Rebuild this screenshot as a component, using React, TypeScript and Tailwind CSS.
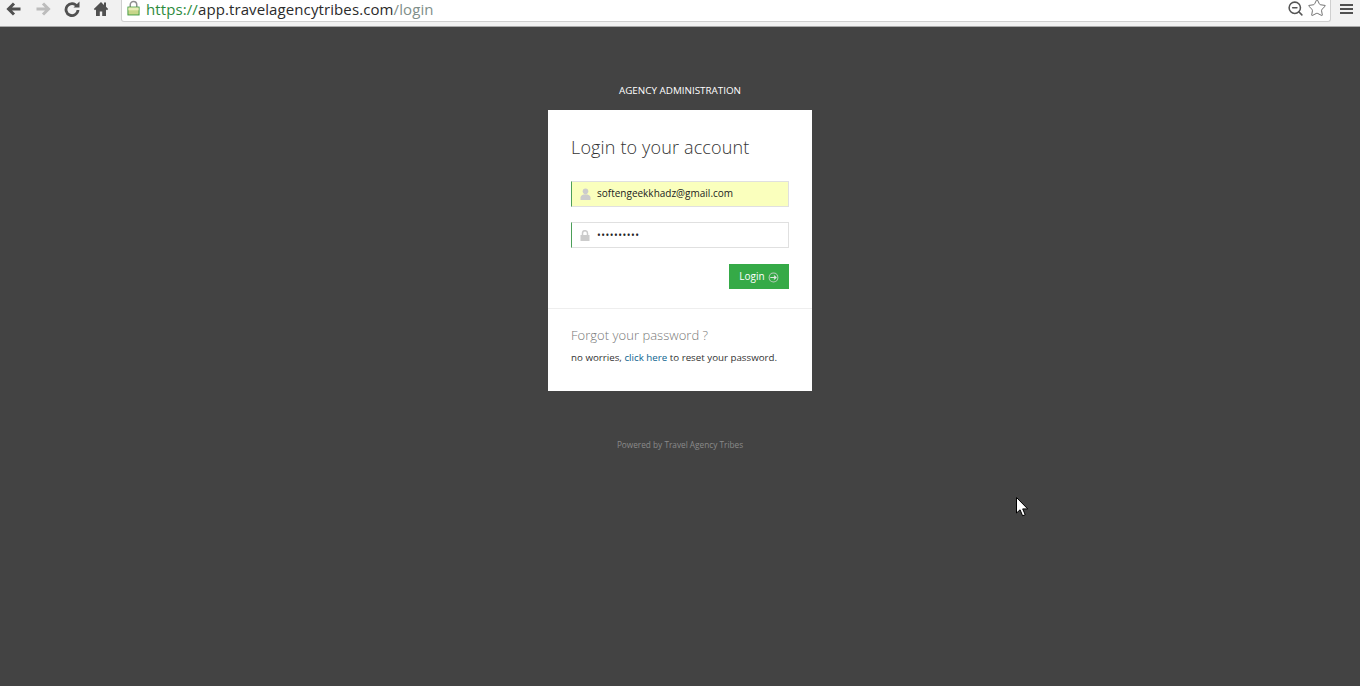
import { ZoomOut, Star } from 'lucide-react';

const openSans = { fontFamily: '"Open Sans", sans-serif' };

function BrowserBar() {
  return (
    <div className="h-[27px] flex items-start bg-[#f1f1f1] border-b border-[#a9a9a9]">
      <div className="w-[121px] h-[17px] flex items-center pl-[6px] shrink-0">
        <svg viewBox="0 0 16 16" className="w-[16px] h-[16px]">
          <path d="M14.5 8H3M8 2.5 2.5 8 8 13.5" fill="none" stroke="#505050" strokeWidth="3" />
        </svg>
        <svg viewBox="0 0 16 16" className="w-[16px] h-[16px] ml-[13px]">
          <path d="M1.5 8H13M8 2.5 13.5 8 8 13.5" fill="none" stroke="#bcbcbc" strokeWidth="3" />
        </svg>
        <svg viewBox="0 0 16 16" className="w-[16px] h-[16px] ml-[13px]">
          <path d="M13 5.2A6 6 0 1 0 14 9" fill="none" stroke="#505050" strokeWidth="2.8" />
          <path d="M9.5 6.5H15.5V0.5z" fill="#505050" />
        </svg>
        <svg viewBox="0 0 16 16" className="w-[16px] h-[16px] ml-[13px]">
          <path d="M8 1 0.8 8 2 9.2 3 8.4V15h3.8v-4.5h2.4V15H13V8.4l1 .8L15.2 8 13 5.8V1.5h-2v2.4z" fill="#505050" />
        </svg>
      </div>
      <div className="w-[1210px] h-[22px] bg-white border-l border-r border-b border-[#cfcfcf] rounded-b-[3px] flex items-center pl-[5px] pr-[3px] pb-[3px]">
        <svg viewBox="0 0 14 16" className="w-[13px] h-[16px] shrink-0 -mt-[2px]">
          <path d="M3.5 7V4.5a3.5 3.5 0 0 1 7 0V7" fill="none" stroke="#8f8f8f" strokeWidth="1.6" />
          <rect x="1" y="7" width="12" height="8.5" fill="#c8d68a" stroke="#3f9a3f" />
          <rect x="1.5" y="7.5" width="11" height="3" fill="#e8edb8" />
        </svg>
        <div className="ml-[6px] text-[15px] leading-[17px] tracking-[0.1px]">
          <span className="text-[#2e8b3d]">https://</span>
          <span className="text-[#2b2b2b]">app.travelagencytribes.com</span>
          <span className="text-[#7f8f8a]">/login</span>
        </div>
        <div className="ml-auto flex items-center gap-[3px] -mt-[2px]">
          <ZoomOut className="w-[17px] h-[17px] text-[#555555]" strokeWidth={2.2} />
          <Star className="w-[20px] h-[20px] text-[#666666]" strokeWidth={1.1} />
        </div>
      </div>
      <div className="flex-1 h-[17px] flex flex-col items-center justify-center gap-[2px] pl-[1px]">
        <div className="w-[13px] h-[2px] bg-[#505050]" />
        <div className="w-[13px] h-[2px] bg-[#505050]" />
        <div className="w-[13px] h-[2px] bg-[#505050]" />
      </div>
    </div>
  );
}

export default function App() {
  return (
    <div className="relative w-screen h-screen overflow-hidden bg-[#434343]" style={openSans}>
      <BrowserBar />

      <div className="flex flex-col items-center pt-[57px]">
        <div className="h-[12px] leading-[12px] text-[9.85px] text-white mb-[14px]">AGENCY ADMINISTRATION</div>

        {/* Login card */}
        <div className="w-[264px] h-[281px] bg-white flex flex-col">
          <div className="h-[199px] px-[23px] pt-[25px] border-b border-[#eeeeee]">
            <h3 className="h-[24px] text-[18px] leading-[24px] font-light tracking-[0.15px] text-[#333333]">Login to your account</h3>

            <div className="mt-[22px] h-[26px] flex items-center bg-[#faffbd] border border-[#e0e0e0] border-l-[#4c9f58] pb-[1px]">
              <svg viewBox="0 0 11 12" className="w-[11px] h-[12px] ml-[8px] shrink-0">
                <circle cx="5.5" cy="3.2" r="2.8" fill="#cccccc" />
                <path d="M0.5 12V9.5C0.5 7.5 2.5 6.2 5.5 6.2s5 1.3 5 3.3V12z" fill="#cccccc" />
              </svg>
              <span className="ml-[6px] text-[10px] text-[#222222]">softengeekkhadz@gmail.com</span>
            </div>

            <div className="mt-[15px] h-[26px] flex items-center bg-white border border-[#e0e0e0] border-l-[#4c9f58]">
              <svg viewBox="0 0 10 11" className="w-[10px] h-[11px] ml-[8px] shrink-0">
                <path d="M2.5 5V3.2a2.5 2.5 0 0 1 5 0V5" fill="none" stroke="#cccccc" strokeWidth="1.5" />
                <rect x="0.5" y="5" width="9" height="6" fill="#cccccc" />
              </svg>
              <span className="ml-[7px] text-[10px] leading-[10px] text-[#222222] tracking-[0.5px]">••••••••••</span>
            </div>

            <div className="flex justify-end mt-[16px]">
              <button className="w-[60px] h-[25px] bg-[#35aa47] text-white text-[10px] flex items-center justify-center gap-[3px]">
                Login
                <svg viewBox="0 0 12 12" className="w-[11px] h-[11px] mt-[1px]">
                  <circle cx="6" cy="6" r="4.8" fill="none" stroke="#b9ccbd" strokeWidth="1.1" />
                  <path d="M2.5 6h6M6.5 4l2.2 2-2.2 2" fill="none" stroke="#dfe9e1" strokeWidth="1.3" />
                </svg>
              </button>
            </div>
          </div>

          <div className="px-[23px] pt-[16px]">
            <h4 className="h-[20px] text-[13px] leading-[20px] font-light tracking-[0.03px] text-[#777777]">Forgot your password ?</h4>
            <p className="mt-[6px] text-[9.75px] leading-[14px] text-[#333333]">
              no worries, <span className="text-[#0d638f]">click here</span> to reset your password.
            </p>
          </div>
        </div>

        <div className="mt-[48px] text-[8.25px] leading-[12px] text-[#8a8a8a]">Powered by Travel Agency Tribes</div>
      </div>

      {/* mouse pointer */}
      <svg viewBox="0 0 13 20" className="absolute left-[1016px] top-[497px] w-[13px] h-[20px]">
        <path d="M0.5 0.5v15.5l3.6-3.2 2.5 6 2.6-1.1-2.5-5.8h5z" fill="#ffffff" stroke="#000000" strokeWidth="1" />
      </svg>
    </div>
  );
}
